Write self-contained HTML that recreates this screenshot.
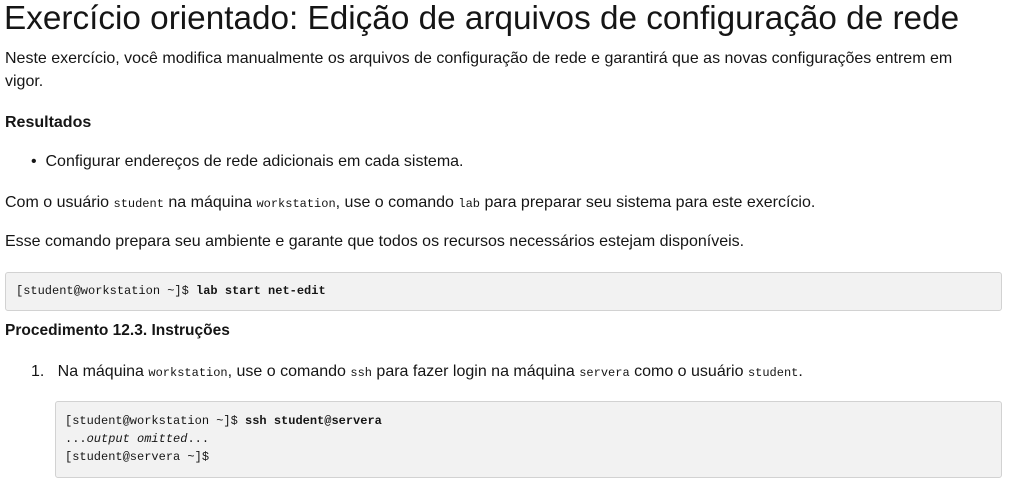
<!DOCTYPE html>
<html><head><meta charset="utf-8"><style>
body{margin:0;width:1010px;height:491px;overflow:hidden;background:#fff;font-family:"Liberation Sans",sans-serif;color:#151515;position:relative}
.a{position:absolute;white-space:nowrap}
.t{font-size:16px}
code,.m{font-family:"Liberation Mono",monospace;font-size:12px}
.box{position:absolute;background:#f2f2f2;border:1px solid #d2d2d2;border-radius:3px}
</style></head><body>
<div class="a" style="left:4px;top:-1px;font-size:33.3px;line-height:40px">Exercício orientado: Edição de arquivos de configuração de rede</div>
<div class="a t" style="left:5px;top:50px">Neste exercício, você modifica manualmente os arquivos de configuração de rede e garantirá que as novas configurações entrem em</div>
<div class="a t" style="left:5px;top:73px">vigor.</div>
<div class="a t" style="left:5px;top:114px;font-weight:bold">Resultados</div>
<div class="a t" style="left:31px;top:153px">•&nbsp;&nbsp;Configurar endereços de rede adicionais em cada sistema.</div>
<div class="a t" style="left:5px;top:194px">Com o usuário <code>student</code> na máquina <code>workstation</code>, use o comando <code>lab</code> para preparar seu sistema para este exercício.</div>
<div class="a t" style="left:5px;top:233px">Esse comando prepara seu ambiente e garante que todos os recursos necessários estejam disponíveis.</div>
<div class="box" style="left:5px;top:272px;width:995px;height:37px"></div>
<div class="a m" style="left:16px;top:284px">[student@workstation ~]$ <b>lab start net-edit</b></div>
<div class="a t" style="left:5px;top:322px;font-weight:bold;font-size:15.5px">Procedimento 12.3. Instruções</div>
<div class="a t" style="left:31px;top:363px">1.&nbsp;&nbsp;&nbsp;Na máquina <code>workstation</code>, use o comando <code>ssh</code> para fazer login na máquina <code>servera</code> como o usuário <code>student</code>.</div>
<div class="box" style="left:55px;top:401px;width:945px;height:75px"></div>
<div class="a m" style="left:65px;top:412px;line-height:18px">[student@workstation ~]$ <b>ssh student@servera</b><br>...<i>output omitted</i>...<br>[student@servera ~]$</div>
</body></html>
